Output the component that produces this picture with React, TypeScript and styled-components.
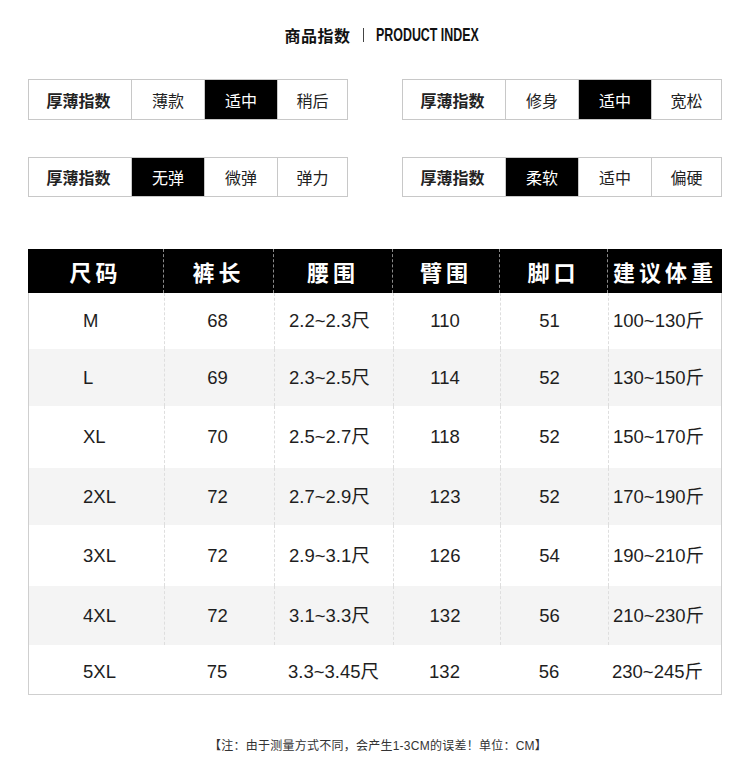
import React from "react";
import styled, { createGlobalStyle } from "styled-components";

const GlobalStyle = createGlobalStyle`
  html, body {
    margin: 0;
    padding: 0;
    background: #fff;
  }
  body {
    font-family: "Liberation Sans", "Noto Sans CJK SC", sans-serif;
    color: #222;
  }
  * {
    box-sizing: border-box;
  }
`;

const CJK = `"Noto Sans CJK SC", "Liberation Sans", sans-serif`;

const Page = styled.div`
  width: 750px;
  min-height: 779px;
  padding: 0 28px;
  display: flex;
  flex-direction: column;
`;

const Title = styled.div`
  margin-top: 25px;
  height: 20px;
  display: flex;
  align-items: center;
  justify-content: center;
  padding-left: 12px;
  color: #111;
`;

const TitleCn = styled.span`
  font-family: ${CJK};
  font-size: 16px;
  font-weight: 700;
  letter-spacing: 0.5px;
`;

const TitleBar = styled.span`
  width: 1px;
  height: 14px;
  background: #444;
  margin: 0 12px 0 12px;
`;

// condensed look: the narrow face is not installed, so squeeze the bold face
const TitleEn = styled.span`
  display: inline-block;
  font-family: "Liberation Sans", sans-serif;
  font-size: 18px;
  font-weight: 700;
  transform: scaleX(0.69);
  transform-origin: left center;
  margin-right: -47px;
`;

const IndexGrid = styled.div`
  margin-top: 34px;
  display: grid;
  grid-template-columns: 320px 320px;
  justify-content: space-between;
  row-gap: 37px;
`;

const IndexBox = styled.div<{ $h: number }>`
  display: grid;
  grid-template-columns: 102px 73px 73px 1fr;
  height: ${(p) => p.$h}px;
  border: 1px solid #c8c8c8;
`;

const IndexCell = styled.div<{ $active?: boolean; $label?: boolean }>`
  display: flex;
  align-items: center;
  justify-content: center;
  font-family: ${CJK};
  font-size: 16px;
  font-weight: ${(p) => (p.$label ? 700 : 400)};
  color: ${(p) => (p.$active ? "#fff" : "#222")};
  background: ${(p) => (p.$active ? "#000" : "#fff")};
  padding-right: ${(p) => (p.$label ? 3 : 0)}px;
  & + & {
    border-left: 1px solid #c8c8c8;
  }
`;

const Table = styled.div`
  margin-top: 52px;
  display: flex;
  flex-direction: column;
`;

const cols = "135px 110px 119px 107px 108px 1fr";

const HeadRow = styled.div`
  display: grid;
  grid-template-columns: ${cols};
  height: 44px;
  background: #000;
`;

const HeadCell = styled.div`
  display: flex;
  align-items: center;
  justify-content: center;
  font-family: ${CJK};
  font-size: 22px;
  font-weight: 700;
  letter-spacing: 4px;
  color: #fff;
  & + & {
    border-left: 1px dashed #8a8a8a;
  }
`;

const Body = styled.div`
  border: 1px solid #cfcfcf;
  border-top: none;
`;

const Row = styled.div<{ $shade: boolean; $h: number; $pt: number }>`
  display: grid;
  grid-template-columns: ${cols};
  height: ${(p) => p.$h}px;
  padding-top: ${(p) => p.$pt}px;
  background: ${(p) => (p.$shade ? "#f4f4f4" : "#fff")};
`;

const Cell = styled.div<{
  $align: "left" | "center";
  $pl: number;
  $pr: number;
  $sep: boolean;
}>`
  display: flex;
  align-items: center;
  justify-content: ${(p) => (p.$align === "center" ? "center" : "flex-start")};
  padding-left: ${(p) => p.$pl}px;
  padding-right: ${(p) => p.$pr}px;
  font-size: 18.5px;
  line-height: 22px;
  color: #1e1e1e;
  border-left: ${(p) => (p.$sep ? "1px dashed #dedede" : "none")};
`;

const Note = styled.div`
  margin-top: 44px;
  text-align: center;
  font-family: "Liberation Sans", "Noto Sans CJK SC", sans-serif;
  font-size: 12px;
  line-height: 14px;
  letter-spacing: 0.25px;
  padding-left: 6px;
  color: #333;
`;

const indexes = [
  { h: 41, items: ["薄款", "适中", "稍后"], active: 1 },
  { h: 41, items: ["修身", "适中", "宽松"], active: 1 },
  { h: 40, items: ["无弹", "微弹", "弹力"], active: 0 },
  { h: 40, items: ["柔软", "适中", "偏硬"], active: 0 },
];

const headers = ["尺码", "裤长", "腰围", "臂围", "脚口", "建议体重"];

const colStyle: { align: "left" | "center"; pl: number; pr: number }[] = [
  { align: "left", pl: 54, pr: 0 },
  { align: "center", pl: 0, pr: 4 },
  { align: "left", pl: 14, pr: 0 },
  { align: "center", pl: 0, pr: 4 },
  { align: "center", pl: 0, pr: 10 },
  { align: "left", pl: 4, pr: 0 },
];

const rows = [
  ["M", "68", "2.2~2.3尺", "110", "51", "100~130斤"],
  ["L", "69", "2.3~2.5尺", "114", "52", "130~150斤"],
  ["XL", "70", "2.5~2.7尺", "118", "52", "150~170斤"],
  ["2XL", "72", "2.7~2.9尺", "123", "52", "170~190斤"],
  ["3XL", "72", "2.9~3.1尺", "126", "54", "190~210斤"],
  ["4XL", "72", "3.1~3.3尺", "132", "56", "210~230斤"],
  ["5XL", "75", "3.3~3.45尺", "132", "56", "230~245斤"],
];

const rowHeights = [56, 57, 62, 57, 61, 59, 49];

export default function App() {
  return (
    <>
      <GlobalStyle />
      <Page>
        <Title>
          <TitleCn>商品指数</TitleCn>
          <TitleBar />
          <TitleEn>PRODUCT INDEX</TitleEn>
        </Title>

        <IndexGrid>
          {indexes.map((box, i) => (
            <IndexBox key={i} $h={box.h}>
              <IndexCell $label>厚薄指数</IndexCell>
              {box.items.map((t, j) => (
                <IndexCell key={j} $active={j === box.active}>
                  {t}
                </IndexCell>
              ))}
            </IndexBox>
          ))}
        </IndexGrid>

        <Table>
          <HeadRow>
            {headers.map((h) => (
              <HeadCell key={h}>{h}</HeadCell>
            ))}
          </HeadRow>
          <Body>
            {rows.map((r, i) => (
              <Row
                key={r[0]}
                $shade={i % 2 === 1}
                $h={rowHeights[i]}
                $pt={i === rows.length - 1 ? 5 : 0}
              >
                {r.map((v, j) => (
                  <Cell
                    key={j}
                    $align={colStyle[j].align}
                    $pl={colStyle[j].pl}
                    $pr={colStyle[j].pr}
                    $sep={j > 0 && i < rows.length - 1}
                  >
                    {v}
                  </Cell>
                ))}
              </Row>
            ))}
          </Body>
        </Table>

        <Note>【注：由于测量方式不同，会产生1-3CM的误差！单位：CM】</Note>
      </Page>
    </>
  );
}
